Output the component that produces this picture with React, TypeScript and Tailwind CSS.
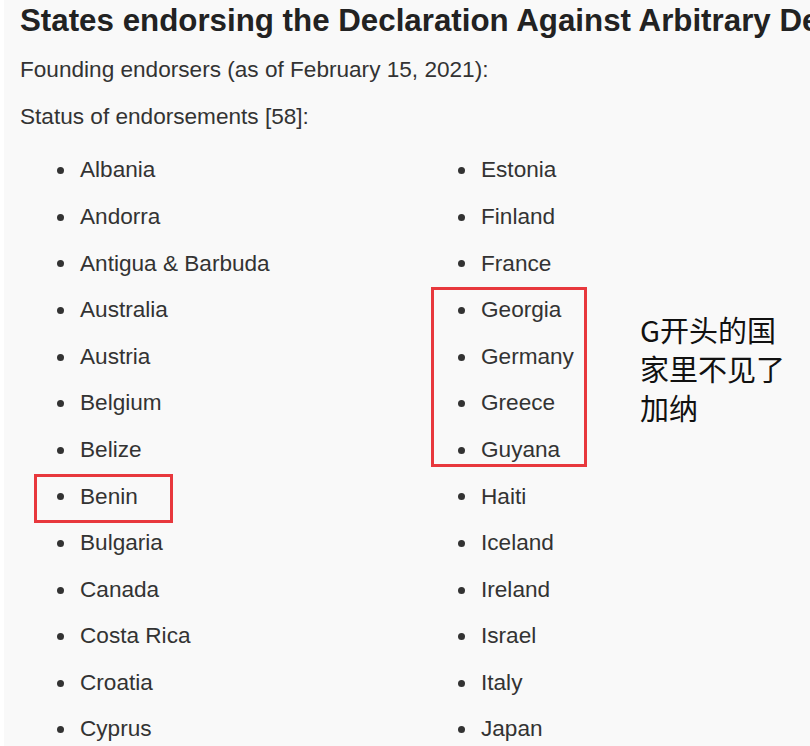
import React from 'react';

const leftColumn = [
    'Albania',
    'Andorra',
    'Antigua & Barbuda',
    'Australia',
    'Austria',
    'Belgium',
    'Belize',
    'Benin',
    'Bulgaria',
    'Canada',
    'Costa Rica',
    'Croatia',
    'Cyprus',
];

const rightColumn = [
    'Estonia',
    'Finland',
    'France',
    'Georgia',
    'Germany',
    'Greece',
    'Guyana',
    'Haiti',
    'Iceland',
    'Ireland',
    'Israel',
    'Italy',
    'Japan',
];

function CountryList({ items }: { items: string[] }) {
    return (
        <ul className="flex flex-col">
            {items.map(name => (
                <li key={name} className="flex items-center h-[46.6px]">
                    <span className="w-[7px] h-[7px] rounded-full bg-[#333] ml-[37px] mr-[16px] mt-[1px]" />
                    <span>{name}</span>
                </li>
            ))}
        </ul>
    );
}

export default function App() {
    return (
        <div className="bg-white w-[810px] h-[746px] overflow-hidden">
            <div
                className="relative ml-1 h-full bg-[#f9f9f9] text-[#333] pl-4 pt-[6px]"
                style={{ fontFamily: '"Liberation Sans", Arial, sans-serif' }}
            >
                <h2 className="text-[31.3px] font-bold leading-[30px] whitespace-nowrap text-[#222]">
                    States endorsing the Declaration Against Arbitrary Detention in State-to-State Relations
                </h2>
                <p className="text-[22.6px] leading-[47px] mt-[10px]">Founding endorsers (as of February 15, 2021):</p>
                <p className="text-[22.6px] leading-[47px]">Status of endorsements [58]:</p>

                <div className="grid grid-cols-[401px_1fr] text-[22.6px] mt-[7px]">
                    <CountryList items={leftColumn} />
                    <CountryList items={rightColumn} />
                </div>

                {/* annotations */}
                <div className="absolute left-[30px] top-[474px] w-[139px] h-[49px] border-[3px] border-[#e8383d]" />
                <div className="absolute left-[427px] top-[287px] w-[156px] h-[180px] border-[3px] border-[#e8383d]" />
                <div
                    className="absolute left-[636px] top-[310px] text-[29px] leading-[39px] text-[#111]"
                    style={{ fontFamily: '"Noto Sans CJK SC", "Liberation Sans", sans-serif' }}
                >
                    G开头的国
                    <br />
                    家里不见了
                    <br />
                    加纳
                </div>
            </div>
        </div>
    );
}
